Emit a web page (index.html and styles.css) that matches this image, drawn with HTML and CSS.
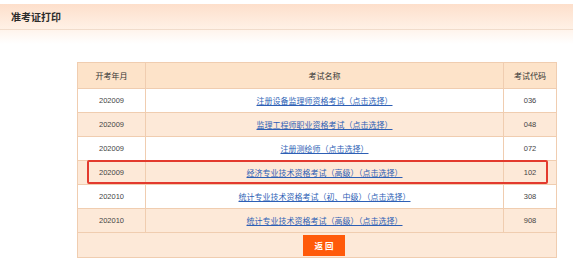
FILE: index.html
```html
<!DOCTYPE html>
<html>
<head>
<meta charset="utf-8">
<link rel="stylesheet" href="styles.css">
</head>
<body>
<div class="titlebar"><span class="title">准考证打印</span></div>
<div class="fade"></div>
<div class="content">
  <div class="tablewrap">
    <table class="grid">
      <colgroup><col class="c1"><col class="c2"><col class="c3"></colgroup>
      <tr class="head"><th>开考年月</th><th>考试名称</th><th>考试代码</th></tr>
      <tr class="w"><td class="num">202009</td><td><a href="#">注册设备监理师资格考试（点击选择）</a></td><td class="num">036</td></tr>
      <tr class="p"><td class="num">202009</td><td><a href="#">监理工程师职业资格考试（点击选择）</a></td><td class="num">048</td></tr>
      <tr class="w"><td class="num">202009</td><td><a href="#">注册测绘师（点击选择）</a></td><td class="num">072</td></tr>
      <tr class="p"><td class="num">202009</td><td><a href="#">经济专业技术资格考试（高级）（点击选择）</a></td><td class="num">102</td></tr>
      <tr class="w"><td class="num">202010</td><td><a href="#">统计专业技术资格考试（初、中级）（点击选择）</a></td><td class="num">308</td></tr>
      <tr class="p"><td class="num">202010</td><td><a href="#">统计专业技术资格考试（高级）（点击选择）</a></td><td class="num">908</td></tr>
      <tr class="foot"><td colspan="3"><span class="btn">返 回</span></td></tr>
    </table>
    <div class="mark"></div>
  </div>
</div>
</body>
</html>
```
FILE: styles.css
```css
html, body { margin: 0; padding: 0; background: #fff; }
body { font-family: "Noto Sans CJK SC", "Liberation Sans", sans-serif; color: #333; }
.titlebar {
  margin-top: 4px;
  height: 25px;
  border-bottom: 1px solid #f1dccb;
  background: linear-gradient(to bottom, #fddfcb, #fff1e6);
  display: flex;
  align-items: center;
  padding-left: 11px;
}
.title { font-size: 10px; font-weight: bold; color: #2b2b2b; letter-spacing: 0; }
.fade { height: 14px; background: linear-gradient(to bottom, #fff4ec, #ffffff); }
.content { padding-top: 18px; padding-left: 77px; }
.tablewrap { position: relative; width: 479px; }
.grid { border-collapse: collapse; width: 479px; table-layout: fixed; font-size: 8px; }
.c1 { width: 68px; }
.c2 { width: 358px; }
.c3 { width: 53px; }
.grid th, .grid td { border: 1px solid #f0cdb0; text-align: center; padding: 0; }
.grid th { height: 25px; background: #fde3c9; font-weight: normal; color: #333; font-size: 8px; }
.grid td { height: 23px; }
.num { font-family: "Liberation Sans", sans-serif; font-size: 7.5px; color: #444; }
.w td { background: #ffffff; }
.p td { background: #fde9d8; }
.grid a { color: #2d5fb5; text-decoration: underline; }
.foot td { height: 24px; background: #fde9d8; text-align: left; padding-left: 225px; }
.btn {
  display: inline-flex; align-items: center; justify-content: center;
  width: 42px; height: 21px; background: #ff5a0a; color: #fff;
  font-size: 8.5px; font-weight: bold; vertical-align: middle;
}
.mark {
  position: absolute; left: 10px; top: 98px; width: 457px; height: 20px;
  border: 2px solid #e33a2e; border-radius: 2px;
}
```
